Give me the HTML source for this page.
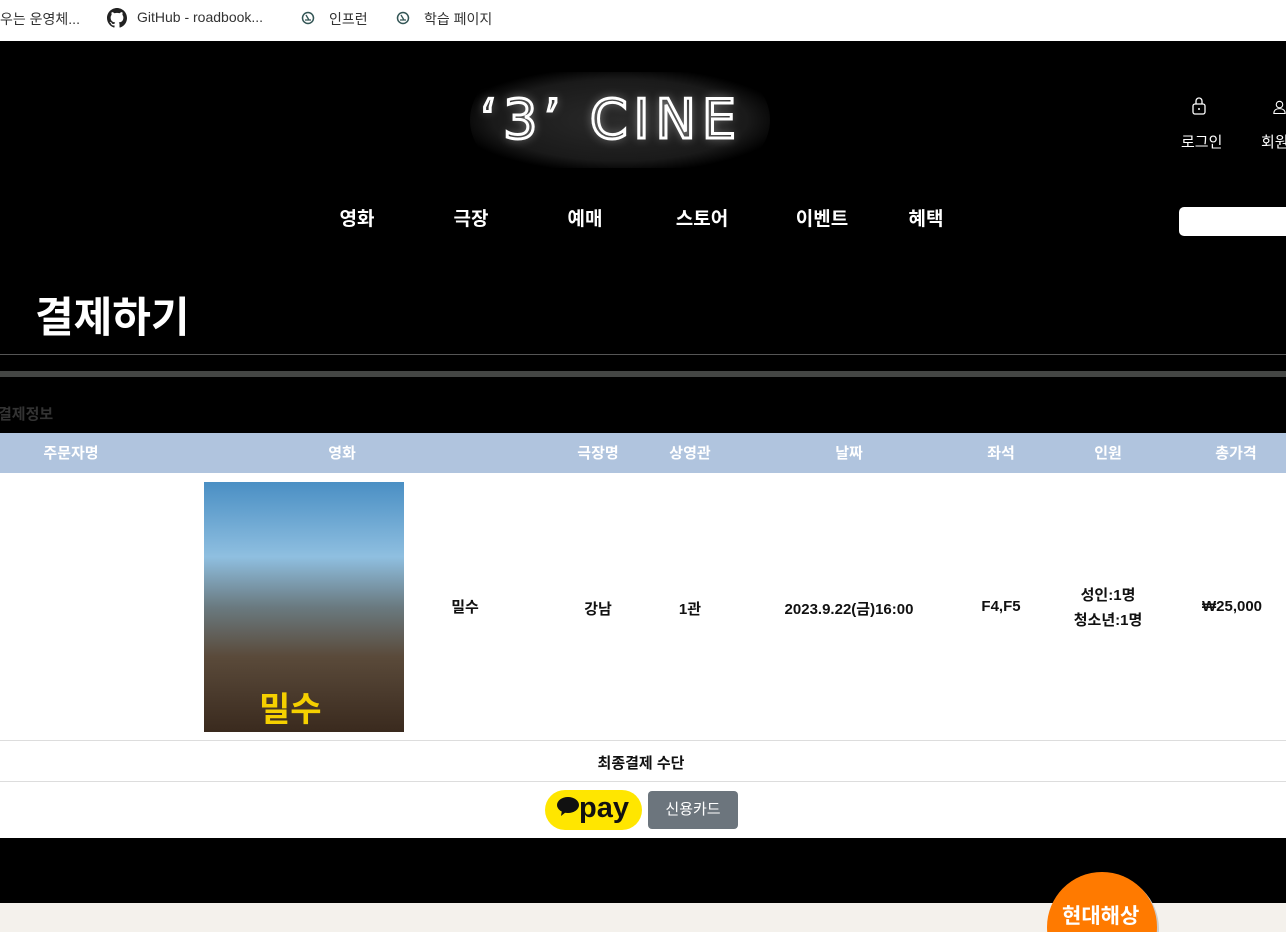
<!DOCTYPE html>
<html style="overflow:hidden;width:1286px;height:932px"><head><meta charset="utf-8"><style>
*{margin:0;padding:0;box-sizing:border-box}
body{width:1286px;height:932px;overflow:hidden;background:#000;font-family:"Liberation Sans","Noto Sans CJK KR",sans-serif;position:relative}
.abs{position:absolute;white-space:nowrap}
.bm{top:0;left:0;width:1286px;height:41px;background:#fff;font-size:14px;color:#333}
.bm span{position:absolute;top:9px}
.c{position:absolute;transform:translateX(-50%);white-space:nowrap}
.nav{color:#fff;font-weight:bold;font-size:19px;top:204px}
.th{top:433px;left:0;width:1286px;height:40px;background:#b0c4de}
.th span{color:#fff;font-weight:bold;font-size:15px;top:9px}
.td span{font-size:15px;font-weight:bold;color:#111}
</style></head><body>
<div class="abs bm">
<span style="left:0">우는 운영체...</span>
<svg class="abs" style="left:107px;top:8px" width="20" height="20" viewBox="0 0 16 16"><path fill="#222" d="M8 0C3.580 0 0 3.58 0 8c0 3.54 2.29 6.53 5.47 7.59.4.07.55-.17.55-.38v-1.34c-2.23.48-2.7-1.07-2.7-1.07-.36-.92-.89-1.170-.89-1.17-.73-.5.06-.49.06-.49.8.06 1.23.83 1.23.83.71 1.22 1.870.87 2.330.66.07-.52.28-.87.51-1.07-1.78-.2-3.65-.89-3.65-3.95 0-.87.31-1.59.82-2.15-.08-.2-.36-1.02.08-2.12 0 0 .67-.21 2.2.82a7.6 7.6 0 014 0c1.53-1.04 2.2-.82 2.2-.82.44 1.1.16 1.92.08 2.12.51.56.82 1.27.82 2.15 0 3.07-1.87 3.75-3.650 3.95.29.25.54.73.54 1.48v2.2c0 .21.15.46.55.38A8 8 0 0016 8c0-4.42-3.58-8-8-8z"/></svg>
<span style="left:137px">GitHub - roadbook...</span>
<svg class="abs" style="left:301px;top:11px" width="14" height="14" viewBox="0 0 14 14"><circle cx="7" cy="7" r="5.5" fill="none" stroke="#355" stroke-width="1.5"/><path d="M5 4l3 5M4 9h6" stroke="#355" stroke-width="1.3"/></svg>
<span style="left:329px">인프런</span>
<svg class="abs" style="left:396px;top:11px" width="14" height="14" viewBox="0 0 14 14"><circle cx="7" cy="7" r="5.5" fill="none" stroke="#355" stroke-width="1.5"/><path d="M5 4l3 5M4 9h6" stroke="#355" stroke-width="1.3"/></svg>
<span style="left:424px">학습 페이지</span>
</div>
<div class="abs" style="left:470px;top:72px;width:300px;height:96px;border-radius:48px;background:radial-gradient(ellipse at center,#2a2a2a 0%,#1a1a1a 60%,#000 78%)"></div>
<div class="abs" style="left:480px;top:90px;font-size:54px;color:transparent;-webkit-text-stroke:3px #fff;letter-spacing:6px;line-height:60px;font-family:'DejaVu Sans',sans-serif;text-shadow:0 0 10px rgba(255,255,255,.5)">‘3’ CINE</div>
<svg class="abs" style="left:1191px;top:96px" width="16" height="20" viewBox="0 0 16 20"><rect x="2" y="8" width="12" height="10" rx="2" fill="none" stroke="#fff" stroke-width="1.3"/><path d="M5 8V5a3 3 0 016 0v3" fill="none" stroke="#fff" stroke-width="1.3"/><circle cx="8" cy="13" r="1" fill="#fff"/></svg>
<div class="abs" style="left:1181px;top:131px;color:#fff;font-size:15px">로그인</div>
<svg class="abs" style="left:1273px;top:98px" width="13" height="18" viewBox="0 0 16 18"><circle cx="8" cy="6" r="4" fill="none" stroke="#fff" stroke-width="1.3"/><path d="M1 17c0-4 3-6 7-6s7 2 7 6z" fill="none" stroke="#fff" stroke-width="1.3"/></svg>
<div class="abs" style="left:1261px;top:131px;color:#fff;font-size:15px;width:25px;overflow:hidden">회원가입</div>
<div class="abs" style="left:1179px;top:207px;width:107px;height:29px;background:#fff;border-radius:5px 0 0 5px"></div>
<span class="c nav" style="left:357px">영화</span>
<span class="c nav" style="left:471px">극장</span>
<span class="c nav" style="left:585px">예매</span>
<span class="c nav" style="left:702px">스토어</span>
<span class="c nav" style="left:822px">이벤트</span>
<span class="c nav" style="left:926px">혜택</span>
<div class="abs" style="left:35px;top:284px;color:#fff;font-size:42px;font-weight:bold">결제하기</div>
<div class="abs" style="left:0;top:354px;width:1286px;height:1px;background:#555"></div>
<div class="abs" style="left:0;top:371px;width:1286px;height:6px;background:#444644"></div>
<div class="abs" style="left:-2px;top:403px;color:#333;font-size:15px;font-weight:bold">결제정보</div>
<div class="abs th">
<span class="c" style="left:71px">주문자명</span><span class="c" style="left:342px">영화</span><span class="c" style="left:598px">극장명</span><span class="c" style="left:690px">상영관</span><span class="c" style="left:849px">날짜</span><span class="c" style="left:1001px">좌석</span><span class="c" style="left:1108px">인원</span><span class="c" style="left:1236px">총가격</span>
</div>
<div class="abs td" style="left:0;top:473px;width:1286px;height:365px;background:#fff">
<div class="abs" style="left:0;top:267px;width:1286px;height:1px;background:#ddd"></div>
<div class="abs" style="left:0;top:308px;width:1286px;height:1px;background:#ddd"></div>
<div class="abs" style="left:204px;top:9px;width:200px;height:250px;background:linear-gradient(180deg,#4a8fc4 0%,#8fbfe0 30%,#6a7a80 50%,#5a4a3a 70%,#3a2a1e 100%)">
<div class="abs" style="left:55px;top:200px;font-size:34px;font-weight:bold;color:#f5d000">밀수</div>
</div>
<span class="c" style="left:465px;top:123px">밀수</span>
<span class="c" style="left:598px;top:125px">강남</span>
<span class="c" style="left:690px;top:125px">1관</span>
<span class="c" style="left:849px;top:125px">2023.9.22(금)16:00</span>
<span class="c" style="left:1001px;top:125px">F4,F5</span>
<span class="c" style="left:1108px;top:111px">성인:1명</span>
<span class="c" style="left:1108px;top:136px">청소년:1명</span>
<span class="c" style="left:1232px;top:125px">₩25,000</span>
<span class="c" style="left:641px;top:279px">최종결제 수단</span>
<div class="abs" style="left:545px;top:317px;width:97px;height:40px;background:#ffe600;border-radius:20px;font-size:29px;font-weight:bold;color:#111;line-height:36px;padding-left:12px"><svg style="vertical-align:middle;margin-top:-6px" width="22" height="20" viewBox="0 0 22 20"><ellipse cx="11" cy="9" rx="11" ry="8" fill="#111"/><path d="M5 14l-1 6 5-4z" fill="#111"/></svg>pay</div>
<div class="abs" style="left:648px;top:318px;width:90px;height:38px;background:#6c757d;border-radius:4px;color:#fff;font-size:15px;font-weight:normal;text-align:center;line-height:38px">신용카드</div>
</div>
<div class="abs" style="left:0;top:838px;width:1286px;height:94px;overflow:hidden">
<div class="abs" style="left:0;top:65px;width:1286px;height:29px;background:#f4f1ec"></div>
<div class="abs" style="left:1047px;top:34px;width:110px;height:110px;border-radius:55px;background:#ff7a00;box-shadow:2px 2px 0 #ccc"></div>
<div class="abs" style="left:1062px;top:62px;color:#fff;font-size:21px;font-weight:bold">현대해상</div>
</div>
</body></html>
